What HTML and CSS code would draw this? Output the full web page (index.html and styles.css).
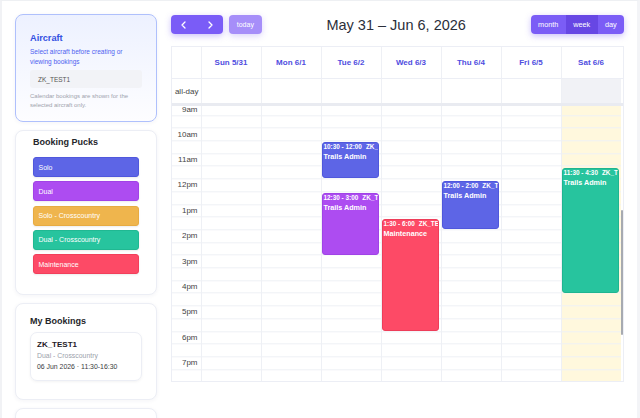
FILE: index.html
```html
<!DOCTYPE html>
<html lang="en">
<head>
<meta charset="utf-8">
<title>Booking Calendar</title>
<link rel="stylesheet" href="styles.css">
</head>
<body>
<div class="page">
  <aside class="sidebar">
    <section class="card aircraft">
      <h2 class="aircraft-title">Aircraft</h2>
      <p class="aircraft-sub">Select aircraft before creating or viewing bookings</p>
      <div class="aircraft-input">ZK_TEST1</div>
      <p class="aircraft-note">Calendar bookings are shown for the selected aircraft only.</p>
    </section>
    <section class="card pucks">
      <h2 class="card-title">Booking Pucks</h2>
      <div class="puck-list">
        <div class="puck solo">Solo</div>
        <div class="puck dual">Dual</div>
        <div class="puck solo-xc">Solo - Crosscountry</div>
        <div class="puck dual-xc">Dual - Crosscountry</div>
        <div class="puck maint">Maintenance</div>
      </div>
    </section>
    <section class="card bookings">
      <h2 class="card-title">My Bookings</h2>
      <div class="booking-item">
        <div class="bk-reg">ZK_TEST1</div>
        <div class="bk-type">Dual - Crosscountry</div>
        <div class="bk-time">06 Jun 2026 · 11:30-16:30</div>
      </div>
    </section>
    <section class="card extra"></section>
  </aside>

  <main class="main">
    <div class="toolbar">
      <div class="tb-left">
        <div class="btn-group">
          <button class="nav-btn" aria-label="prev"><svg width="8" height="8" viewBox="0 0 8 8"><polyline points="5,1 2,4 5,7" fill="none" stroke="#fff" stroke-width="1.3" stroke-linecap="round" stroke-linejoin="round"/></svg></button>
          <button class="nav-btn" aria-label="next"><svg width="8" height="8" viewBox="0 0 8 8"><polyline points="3,1 6,4 3,7" fill="none" stroke="#fff" stroke-width="1.3" stroke-linecap="round" stroke-linejoin="round"/></svg></button>
        </div>
        <button class="today">today</button>
      </div>
      <h1 class="title">May 31 – Jun 6, 2026</h1>
      <div class="btn-group">
        <button class="view-btn month">month</button>
        <button class="view-btn week active">week</button>
        <button class="view-btn day">day</button>
      </div>
    </div>

    <div class="cal">
      <div class="cal-head">
        <div class="axis-cell"></div>
        <div class="dh">Sun 5/31</div>
        <div class="dh">Mon 6/1</div>
        <div class="dh">Tue 6/2</div>
        <div class="dh">Wed 6/3</div>
        <div class="dh">Thu 6/4</div>
        <div class="dh">Fri 6/5</div>
        <div class="dh">Sat 6/6</div>
        <div class="gutter"></div>
      </div>
      <div class="cal-allday">
        <div class="allday-label">all-day</div>
        <div class="ad"></div>
        <div class="ad"></div>
        <div class="ad"></div>
        <div class="ad"></div>
        <div class="ad"></div>
        <div class="ad"></div>
        <div class="ad today-ad"></div>
        <div class="gutter"></div>
      </div>
      <div class="cal-body">
        <div class="cal-scroll">
          <div class="axis">
            <div class="hour first">9am</div>
            <div class="hour">10am</div>
            <div class="hour">11am</div>
            <div class="hour">12pm</div>
            <div class="hour">1pm</div>
            <div class="hour">2pm</div>
            <div class="hour">3pm</div>
            <div class="hour">4pm</div>
            <div class="hour">5pm</div>
            <div class="hour">6pm</div>
            <div class="hour last">7pm</div>
          </div>
          <div class="day-col"></div>
          <div class="day-col"></div>
          <div class="day-col">
            <div class="event ev-solo" style="top:36.4px;height:36.1px"><div class="ev-line"><span>10:30 - 12:00</span><span class="ev-reg">ZK_TEST1</span></div><div class="ev-title">Trails Admin</div></div>
            <div class="event ev-dual" style="top:87.2px;height:61.5px"><div class="ev-line"><span>12:30 - 3:00</span><span class="ev-reg">ZK_TEST1</span></div><div class="ev-title">Trails Admin</div></div>
          </div>
          <div class="day-col">
            <div class="event ev-maint" style="top:112.6px;height:112.3px"><div class="ev-line"><span>1:30 - 6:00</span><span class="ev-reg">ZK_TEST1</span></div><div class="ev-title">Maintenance</div></div>
          </div>
          <div class="day-col">
            <div class="event ev-solo" style="top:74.5px;height:48.8px"><div class="ev-line"><span>12:00 - 2:00</span><span class="ev-reg">ZK_TEST1</span></div><div class="ev-title">Trails Admin</div></div>
          </div>
          <div class="day-col"></div>
          <div class="day-col today-col">
            <div class="event ev-dualxc" style="top:61.8px;height:125px"><div class="ev-line"><span>11:30 - 4:30</span><span class="ev-reg">ZK_TEST1</span></div><div class="ev-title">Trails Admin</div></div>
          </div>
        </div>
        <div class="scrollbar"><div class="thumb"></div></div>
      </div>
    </div>
  </main>
</div>
</body>
</html>
```

FILE: styles.css
```css
* { box-sizing: border-box; }

body {
  margin: 0;
  background: #fff;
  font-family: "Liberation Sans", Arial, sans-serif;
}

.page {
  display: flex;
  align-items: flex-start;
  gap: 14px;
  height: 418px;
  padding: 13px 13px 0 13px;
  border-top: 1px solid #eef0f3;
  border-left: 2px solid #f1f2f5;
  border-right: 3px solid #f3f4f7;
  overflow: hidden;
}

/* ---------- sidebar ---------- */
.sidebar {
  width: 142px;
  flex: none;
  display: flex;
  flex-direction: column;
  gap: 8px;
}

.card {
  background: #fff;
  border: 1px solid #eceef5;
  border-radius: 8px;
  box-shadow: 0 1px 4px rgba(30, 40, 90, 0.05);
}

.aircraft {
  height: 108px;
  padding: 17px 14px 0;
  border-color: #afc0fc;
  background: linear-gradient(180deg, #edf1ff 0%, #f6f8ff 55%, #fdfdff 100%);
}

.aircraft-title {
  margin: 0;
  font-size: 9.2px;
  line-height: 12px;
  font-weight: 700;
  color: #3451e2;
}

.aircraft-sub {
  margin: 3px 0 0;
  font-size: 6.5px;
  line-height: 9.5px;
  color: #4d62f0;
}

.aircraft-input {
  margin-top: 4px;
  height: 18px;
  padding-left: 8px;
  display: flex;
  align-items: center;
  background: #f2f3f7;
  border-radius: 3px;
  font-size: 6.5px;
  color: #555;
}

.aircraft-note {
  margin: 3.5px 0 0;
  font-size: 6px;
  line-height: 9.3px;
  color: #9ea3ad;
}

.pucks {
  height: 165px;
  padding: 5px 17px 0;
}

.card-title {
  margin: 0;
  font-size: 9px;
  line-height: 12px;
  font-weight: 700;
  color: #25262b;
}

.puck-list {
  margin-top: 9px;
  display: flex;
  flex-direction: column;
  gap: 4.3px;
}

.puck {
  height: 20px;
  padding-left: 4.5px;
  display: flex;
  align-items: center;
  border: 1px solid;
  border-radius: 3px;
  font-size: 7px;
  color: #fff;
  box-shadow: 0 1px 2px rgba(0, 0, 0, 0.08);
}

.puck.solo { background: #5d65e6; border-color: #5058dc; }
.puck.dual { background: #ad4cf1; border-color: #a143e6; }
.puck.solo-xc { background: #efb54d; border-color: #e7ab42; }
.puck.dual-xc { background: #27c49e; border-color: #20b892; }
.puck.maint { background: #fd4a66; border-color: #f23f5b; }

.bookings {
  padding: 11px 14px 18px;
}

.booking-item {
  margin-top: 4.7px;
  border: 1px solid #eceef5;
  border-radius: 7px;
  padding: 6px 6px 8px;
  box-shadow: 0 1px 3px rgba(0, 0, 0, 0.05);
}

.bk-reg {
  font-size: 8px;
  line-height: 11px;
  font-weight: 700;
  color: #1f2026;
}

.bk-type {
  margin-top: 1px;
  font-size: 6.9px;
  line-height: 10px;
  color: #9ca1ab;
}

.bk-time {
  margin-top: 1.6px;
  font-size: 6.9px;
  line-height: 10px;
  color: #3a3b40;
}

.extra {
  height: 40px;
  flex: none;
}

/* ---------- main ---------- */
.main {
  width: 453px;
  flex: none;
}

.toolbar {
  display: flex;
  align-items: center;
  justify-content: space-between;
  height: 20px;
  margin-top: 0.5px;
}

.tb-left {
  display: flex;
  gap: 6px;
}

.btn-group {
  display: flex;
  border-radius: 4px;
  overflow: hidden;
  box-shadow: 0 2px 6px rgba(110, 80, 240, 0.35);
}

.nav-btn {
  width: 26px;
  height: 19.5px;
  padding: 0;
  border: 0;
  background: #7a5cf7;
  display: flex;
  align-items: center;
  justify-content: center;
}

.today {
  width: 32.7px;
  height: 19.5px;
  padding: 0;
  border: 0;
  border-radius: 4px;
  background: #a68ef9;
  color: #fff;
  font-family: inherit;
  font-size: 7px;
  box-shadow: 0 2px 6px rgba(110, 80, 240, 0.25);
}

.title {
  margin: 0;
  font-size: 14.5px;
  font-weight: 400;
  color: #2b2f3a;
}

.view-btn {
  height: 19.5px;
  padding: 0;
  border: 0;
  background: #7b5df6;
  color: #fff;
  font-family: inherit;
  font-size: 7.3px;
}

.view-btn.month { width: 35px; }
.view-btn.week { width: 32px; }
.view-btn.day { width: 26.3px; }
.view-btn.active { background: #6747e4; }

/* ---------- calendar ---------- */
.cal {
  margin-top: 11.5px;
  height: 336px;
  border: 1px solid #eceef5;
}

.cal-head,
.cal-allday {
  display: grid;
  grid-template-columns: 28.5px repeat(7, 60px) 1fr;
}

.cal-head {
  height: 32px;
  border-bottom: 1px solid #eceef5;
}

.dh {
  border-left: 1px solid #eef0f5;
  display: flex;
  align-items: center;
  justify-content: center;
  font-size: 8px;
  font-weight: 700;
  color: #4f4de0;
}

.cal-allday {
  height: 27px;
  border-bottom: 3px solid #e9ebf1;
}

.allday-label {
  display: flex;
  align-items: center;
  justify-content: flex-end;
  padding-right: 2px;
  font-size: 8px;
  color: #444;
}

.ad {
  border-left: 1px solid #eef0f5;
}

.ad.today-ad {
  background: #f1f2f6;
}

.cal-body {
  display: flex;
  height: 275px;
  overflow: hidden;
}

.cal-scroll {
  width: 448.5px;
  flex: none;
  display: grid;
  grid-template-columns: 28.5px repeat(7, 60px);
  height: 275px;
}

.axis,
.day-col {
  background-image: repeating-linear-gradient(180deg, transparent 0, transparent 11.7px, #eef0f5 11.7px, #eef0f5 12.7px);
  background-position: 0 -2.7px;
}

.hour {
  height: 25.4px;
  padding-right: 3px;
  text-align: right;
  font-size: 8px;
  line-height: 12.7px;
  color: #444;
}

.hour.first {
  height: 22.7px;
  line-height: 7.3px;
}

.hour.last {
  height: 12.7px;
}

.day-col {
  position: relative;
  border-left: 1px solid #eef0f5;
}

.day-col.today-col {
  background-color: #fff8dd;
}

.event {
  position: absolute;
  left: 0;
  right: 2px;
  padding: 0 1px;
  border: 1px solid;
  border-radius: 3px;
  color: #fff;
  font-weight: 700;
  overflow: hidden;
  white-space: nowrap;
}

.ev-line {
  font-size: 6.4px;
  line-height: 8px;
}

.ev-reg {
  margin-left: 4px;
}

.ev-title {
  font-size: 7.2px;
  line-height: 11px;
}

.ev-solo { background: #5d65e6; border-color: #4f58dc; }
.ev-dual { background: #ad4cf1; border-color: #a043e6; }
.ev-maint { background: #fd4a66; border-color: #ee3d59; }
.ev-dualxc { background: #27c49e; border-color: #1fb590; }

.scrollbar {
  flex: 1;
  position: relative;
}

.thumb {
  position: absolute;
  top: 104px;
  left: 0;
  width: 2.5px;
  height: 125px;
  background: #a7aab0;
  border-radius: 1px;
}
```
